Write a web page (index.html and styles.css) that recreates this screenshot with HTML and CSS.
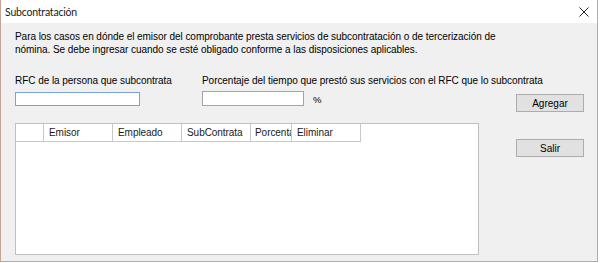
FILE: index.html
```html
<!DOCTYPE html>
<html lang="es">
<head>
<meta charset="utf-8">
<title>Subcontratación</title>
<link rel="stylesheet" href="styles.css">
</head>
<body>
<div class="window">
  <div class="titlebar">
    <span class="title">Subcontratación</span>
    <svg class="close" width="10" height="10" viewBox="0 0 10 10"><path d="M0.5 0.5 L9.5 9.5 M9.5 0.5 L0.5 9.5" stroke="#222" stroke-width="1" fill="none"/></svg>
  </div>
  <div class="content">
    <p class="intro">Para los casos en dónde el emisor del comprobante presta servicios de subcontratación o de tercerización de<br>nómina. Se debe ingresar cuando se esté obligado conforme a las disposiciones aplicables.</p>
    <div class="form">
      <div class="field field-rfc">
        <label class="label">RFC de la persona que subcontrata</label>
        <input class="input input-rfc" type="text">
      </div>
      <div class="field field-pct">
        <label class="label">Porcentaje del tiempo que prestó sus servicios con el RFC que lo subcontrata</label>
        <div class="pct-row">
          <input class="input input-pct" type="text">
          <span class="pct">%</span>
        </div>
      </div>
      <button class="btn btn-add">Agregar</button>
      <div class="grid">
        <div class="grid-head">
          <div class="hcell hcell-row"></div>
          <div class="hcell w69">Emisor</div>
          <div class="hcell w69">Empleado</div>
          <div class="hcell w69">SubContrata</div>
          <div class="hcell w41">Porcentaje</div>
          <div class="hcell w69">Eliminar</div>
        </div>
      </div>
      <button class="btn btn-exit">Salir</button>
    </div>
  </div>
</div>
</body>
</html>
```
FILE: styles.css
```css
* { box-sizing: border-box; }
html, body { margin: 0; padding: 0; background: #ffffff; }
body { width: 600px; height: 263px; overflow: hidden; }

.window {
  width: 598px;
  height: 262px;
  border: 1px solid #c6a496;
  border-top: none;
  display: flex;
  flex-direction: column;
  background: #f0f0f0;
}

.titlebar {
  height: 23px;
  background: #ffffff;
  display: flex;
  align-items: center;
  justify-content: space-between;
  padding: 0 8px 0 4px;
  flex: none;
}
.title {
  font-family: Lato, "Noto Sans", sans-serif;
  font-size: 10.5px;
  letter-spacing: -0.2px;
  color: #1a1a1a;
  line-height: 16px;
}
.close { display: block; margin-top: 1px; }

.content {
  flex: 1;
  padding: 7px 0 0 14px;
  font-family: "Liberation Sans", Arial, sans-serif;
  font-size: 10px;
  letter-spacing: -0.05px;
  color: #000;
}
.intro {
  margin: 0;
  line-height: 13px;
}

.form {
  margin-top: 18px;
  display: grid;
  grid-template-columns: 187px 314px 67px;
  align-items: start;
}

.field { display: flex; flex-direction: column; }
.label { line-height: 13px; white-space: nowrap; }
.input {
  margin: 4px 0 0 0;
  padding: 0;
  background: #fff;
  font: inherit;
  outline: none;
}
.input-rfc { width: 125px; height: 14px; border: 1px solid #7aa3dd; margin-top: 5px; }
.input-pct { width: 102px; height: 15px; border: 1px solid #a5a5a5; }
.pct-row { display: flex; align-items: center; }
.pct { margin-left: 9px; margin-top: 6px; font-size: 9.5px; }

.btn {
  width: 68px;
  height: 18px;
  padding: 0;
  border: 1px solid #adadad;
  background: #e1e1e1;
  font-family: "Liberation Sans", Arial, sans-serif;
  font-size: 10px;
  color: #000;
}
.btn-add { margin-top: 20px; }
.btn-exit { margin-top: 27px; }

.grid {
  grid-column: 1 / 3;
  margin-top: 11px;
  width: 464px;
  height: 132px;
  border: 1px solid #c0c0c0;
  background: #ffffff;
}
.grid-head {
  display: flex;
  height: 18px;
}
.hcell {
  height: 18px;
  border-right: 1px solid #c8c8c8;
  border-bottom: 1px solid #c8c8c8;
  padding-left: 5px;
  line-height: 17px;
  white-space: nowrap;
  overflow: hidden;
  color: #1a1a1a;
}
.hcell-row { width: 28px; }
.w69 { width: 69px; }
.w41 { width: 41px; padding-left: 4px; }
```
